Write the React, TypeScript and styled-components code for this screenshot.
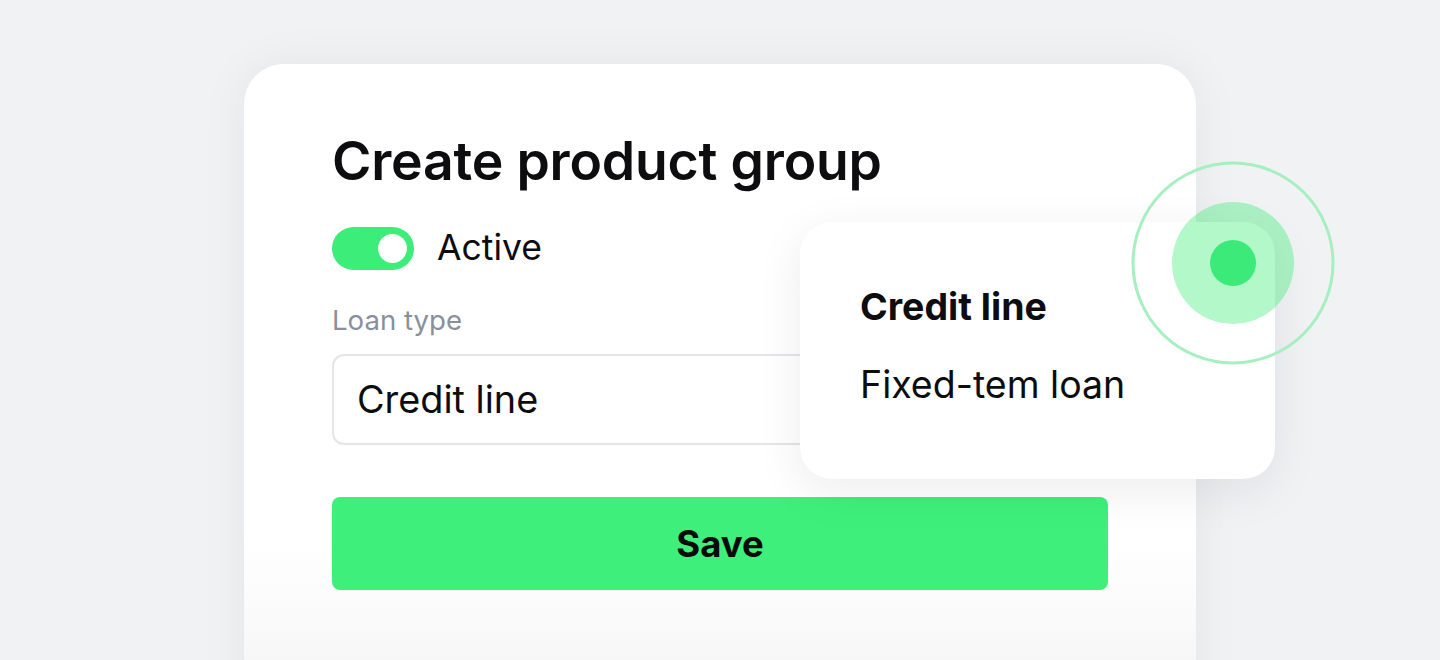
import styled, { createGlobalStyle } from "styled-components";

const GlobalStyle = createGlobalStyle`
  * {
    box-sizing: border-box;
  }

  body {
    margin: 0;
    font-family: Inter, "Noto Sans", sans-serif;
    color: #0d0d0f;
  }
`;

const Page = styled.div`
  width: 1440px;
  height: 660px;
  overflow: hidden;
  background: #f1f2f4;
  padding: 64px 0 0 244px;
`;

const Card = styled.div`
  position: relative;
  width: 952px;
  height: 700px;
  padding: 70px 88px 0;
  border-radius: 40px;
  background: linear-gradient(180deg, #ffffff 0%, #ffffff 68%, #f6f6f7 88%, #f4f4f5 100%);
  box-shadow: 0 0 48px rgba(20, 24, 40, 0.06);
`;

const Title = styled.h1`
  margin: 0;
  font-size: 53.5px;
  line-height: 1;
  font-weight: 600;
  letter-spacing: -0.2px;
`;

const ToggleRow = styled.div`
  display: flex;
  align-items: center;
  gap: 23px;
  margin-top: 39px;
`;

const Switch = styled.div<{ $on?: boolean }>`
  display: flex;
  align-items: center;
  justify-content: ${(p) => (p.$on ? "flex-end" : "flex-start")};
  width: 82px;
  height: 43px;
  padding: 0 7px;
  border-radius: 22px;
  background: ${(p) => (p.$on ? "#3ded79" : "#d9dbe0")};
`;

const Knob = styled.span`
  width: 29px;
  height: 29px;
  border-radius: 50%;
  background: #ffffff;
`;

const ToggleLabel = styled.span`
  font-size: 35.5px;
  line-height: 1;
`;

const FieldLabel = styled.div`
  margin-top: 37px;
  font-size: 27.6px;
  line-height: 1;
  color: #8a9099;
`;

const Select = styled.div`
  display: flex;
  align-items: center;
  height: 91px;
  margin-top: 20px;
  padding: 0 23px;
  border: 2px solid #e4e5e8;
  border-radius: 12px;
  font-size: 37.8px;
  line-height: 1;
`;

const SaveButton = styled.button`
  display: block;
  width: 100%;
  height: 93px;
  margin-top: 52px;
  border: none;
  border-radius: 8px;
  background: #3ef07b;
  font-family: Inter, "Noto Sans", sans-serif;
  font-size: 36.5px;
  font-weight: 700;
  color: #0a0a0a;
`;

const Menu = styled.div`
  position: absolute;
  left: 556px;
  top: 158px;
  width: 475px;
  height: 257px;
  padding: 66px 60px 0;
  border-radius: 32px;
  background: #ffffff;
  box-shadow: 0 12px 48px rgba(20, 24, 40, 0.08);
  display: flex;
  flex-direction: column;
  gap: 40px;
`;

const MenuItem = styled.div<{ $selected?: boolean }>`
  font-size: 37.5px;
  line-height: 1;
  font-weight: ${(p) => (p.$selected ? 700 : 400)};
`;

const Target = styled.svg`
  position: absolute;
  left: 884px;
  top: 94px;
  width: 210px;
  height: 210px;
`;

export default function App() {
  return (
    <>
      <GlobalStyle />
      <Page>
        <Card>
          <Title>Create product group</Title>
          <ToggleRow>
            <Switch $on>
              <Knob />
            </Switch>
            <ToggleLabel>Active</ToggleLabel>
          </ToggleRow>
          <FieldLabel>Loan type</FieldLabel>
          <Select>Credit line</Select>
          <SaveButton>Save</SaveButton>

          <Menu>
            <MenuItem $selected>Credit line</MenuItem>
            <MenuItem>Fixed-tem loan</MenuItem>
          </Menu>

          <Target viewBox="0 0 210 210">
            <circle cx="105" cy="105" r="100" fill="none" stroke="#a6efc0" strokeWidth="3" />
            <circle cx="105" cy="105" r="61" fill="rgba(62, 238, 120, 0.4)" />
            <circle cx="105" cy="105" r="23" fill="#3bea78" />
          </Target>
        </Card>
      </Page>
    </>
  );
}
